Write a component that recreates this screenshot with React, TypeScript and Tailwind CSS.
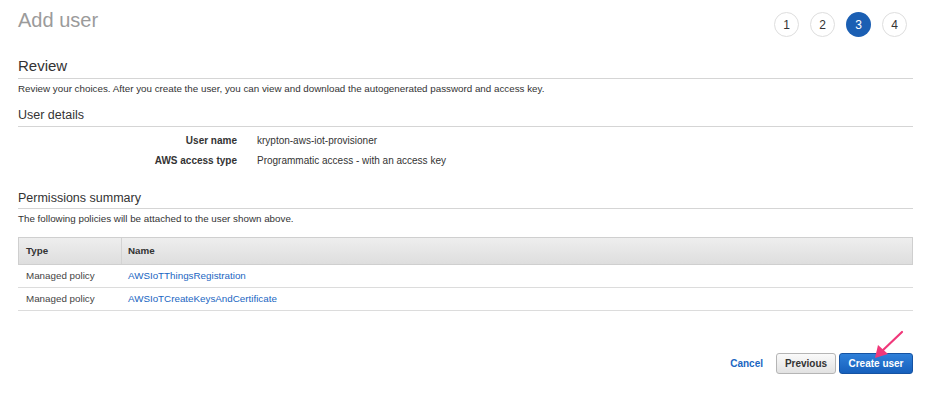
import React from 'react';

const steps = [1, 2, 3, 4];

const policies = ['AWSIoTThingsRegistration', 'AWSIoTCreateKeysAndCertificate'];

const details = [
    { label: 'User name', value: 'krypton-aws-iot-provisioner' },
    { label: 'AWS access type', value: 'Programmatic access - with an access key' },
];

export default function App() {
    const sectionTitle = "leading-[18px] text-[#333] border-b border-[#d5d5d5]";

    return (
        <div className="relative w-[941px] h-[399px] bg-white pl-[18px] pr-[28px] font-['Liberation_Sans',Arial,sans-serif] text-[#333]">
            <div className="flex items-start justify-between h-[57px]">
                <h1 className="mt-[8px] text-[20px] leading-[24px] text-[#9b9b9b]">Add user</h1>
                <div className="flex gap-[11px] mt-[12px] mr-[6px]">
                    {steps.map((s) => (
                        <span
                            key={s}
                            className={
                                s === 3
                                    ? "w-[25px] h-[25px] rounded-full flex items-center justify-center text-[12px] bg-[#1b5fb3] text-white"
                                    : "w-[25px] h-[25px] rounded-full flex items-center justify-center text-[12px] border border-[#dedede] text-[#333]"
                            }
                        >
                            {s}
                        </span>
                    ))}
                </div>
            </div>

            <h2 className={`${sectionTitle} text-[15px] pb-[3px]`}>Review</h2>
            <p className="mt-[3px] text-[9.8px] leading-[14px] text-[#333]">
                Review your choices. After you create the user, you can view and download the autogenerated password and access key.
            </p>

            <h2 className={`${sectionTitle} text-[12.5px] mt-[10px] pb-[2px]`}>User details</h2>
            <div className="mt-[3px]">
                {details.map((d) => (
                    <div key={d.label} className="flex items-center h-[20px] text-[10px]">
                        <span className="w-[219px] text-right font-bold text-[#333]">{d.label}</span>
                        <span className="ml-[20px] text-[#333]">{d.value}</span>
                    </div>
                ))}
            </div>

            <h2 className={`${sectionTitle} text-[12.5px] mt-[19px] pb-[1px]`}>Permissions summary</h2>
            <p className="mt-[3px] text-[9.8px] leading-[14px]">The following policies will be attached to the user shown above.</p>

            <div className="mt-[11px] text-[9.8px]">
                <div className="flex h-[28px] items-center border border-[#cfcfcf] bg-gradient-to-b from-[#eeeeee] to-[#dedede] font-bold text-[#333]">
                    <span className="w-[103px] h-full flex items-center pl-[7px] border-r border-[#d3d3d3]">Type</span>
                    <span className="pl-[6px]">Name</span>
                </div>
                {policies.map((p) => (
                    <div key={p} className="flex h-[23px] items-center border-b border-[#dcdcdc]">
                        <span className="w-[104px] pl-[8px] text-[#444]">Managed policy</span>
                        <a className="pl-[6px] text-[#1a66c2]">{p}</a>
                    </div>
                ))}
            </div>

            <div className="mt-[42px] flex items-center justify-end text-[10px] font-bold">
                <a className="text-[#1a66c2] mr-[13px]">Cancel</a>
                <button className="h-[21px] w-[60px] rounded-[3px] border border-[#b5b5b5] bg-gradient-to-b from-[#fafafa] to-[#e2e2e2] text-[#333]">
                    Previous
                </button>
                <button className="ml-[3px] h-[21px] w-[74px] rounded-[3px] border border-[#1553a3] bg-gradient-to-b from-[#2f80d9] to-[#1660bd] text-white">
                    Create user
                </button>
            </div>

            <svg className="absolute left-[868px] top-[328px]" width="40" height="34" viewBox="0 0 40 34">
                <line x1="34" y1="4" x2="13" y2="24" stroke="#f0387a" strokeWidth="2.2" strokeLinecap="round" />
                <polygon points="7,30 10,17 20,26" fill="#f0387a" />
            </svg>
        </div>
    );
}
